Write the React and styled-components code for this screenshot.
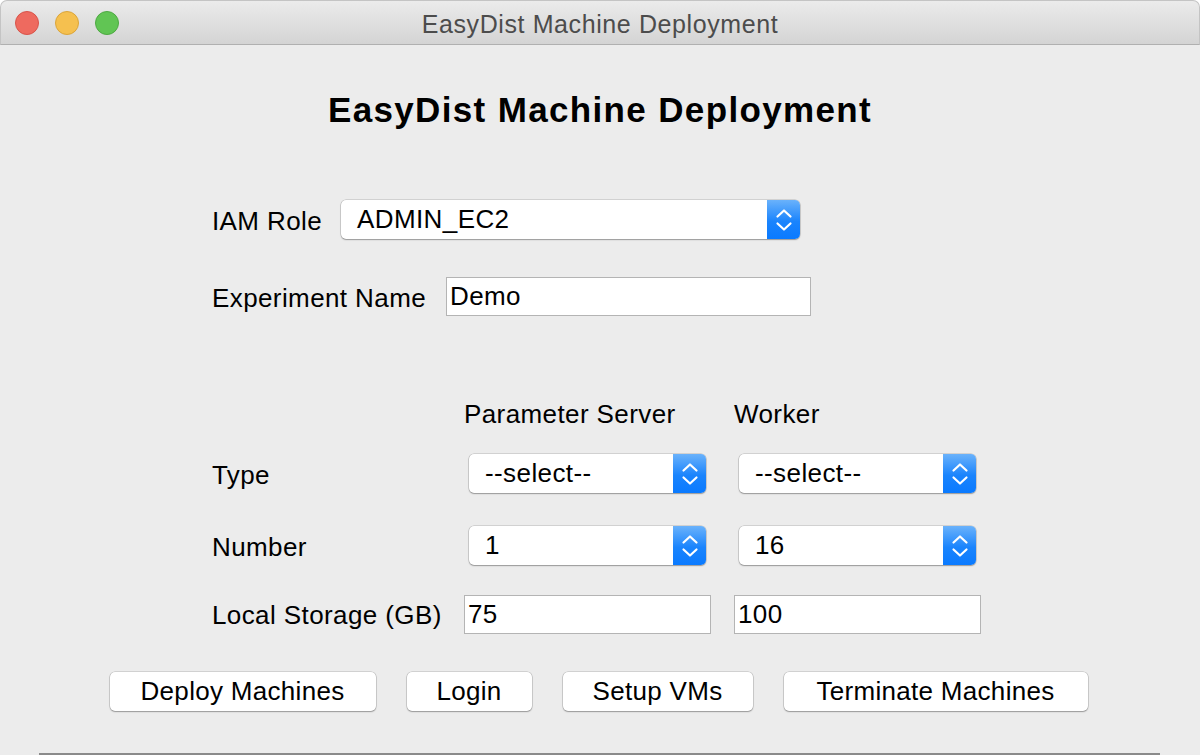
import React from "react";
import styled, { createGlobalStyle } from "styled-components";

const GlobalStyle = createGlobalStyle`
  html, body {
    margin: 0;
    padding: 0;
    background: #ffffff;
  }
  body {
    font-family: "Liberation Sans", Arial, sans-serif;
    color: #000;
  }
`;

const Chevrons = () => (
  <svg width="20" height="28" viewBox="0 0 20 28" fill="none">
    <path d="M3.5 10.5 L10 4.5 L16.5 10.5" stroke="#fff" strokeWidth="2.2" strokeLinecap="round" strokeLinejoin="round" />
    <path d="M3.5 17.5 L10 23.5 L16.5 17.5" stroke="#fff" strokeWidth="2.2" strokeLinecap="round" strokeLinejoin="round" />
  </svg>
);

const Select = ({ value, width, inset }) => (
  <SelectBox $width={width} $inset={inset}>
    <SelectText>{value}</SelectText>
    <SelectArrow>
      <Chevrons />
    </SelectArrow>
  </SelectBox>
);

const App = () => {
  return (
    <>
      <GlobalStyle />
      <Window>
        <TitleBar>
          <Lights>
            <Light $color="#ee6a5f" $border="#d8544a" />
            <Light $color="#f5c04f" $border="#dba53a" />
            <Light $color="#61c554" $border="#4ea943" />
          </Lights>
          <WindowTitle>EasyDist Machine Deployment</WindowTitle>
        </TitleBar>
        <Body>
          <Heading>EasyDist Machine Deployment</Heading>
          <Form>
            <Row $top={70}>
              <Label $width={129}>IAM Role</Label>
              <Select value="ADMIN_EC2" width={459} />
            </Row>
            <Row $top={38}>
              <Label $width={234}>Experiment Name</Label>
              <TextBox $width={365} value="Demo" readOnly />
            </Row>
            <Row $top={85} $height={27}>
              <Label $width={252} $flat />
              <Column>
                <Label $flat>Parameter Server</Label>
              </Column>
              <Column>
                <Label $flat>Worker</Label>
              </Column>
            </Row>
            <Row $top={26}>
              <Label $width={252}>Type</Label>
              <Column><Select value="--select--" width={237} inset /></Column>
              <Column><Select value="--select--" width={237} inset /></Column>
            </Row>
            <Row $top={33}>
              <Label $width={252}>Number</Label>
              <Column><Select value="1" width={237} inset /></Column>
              <Column><Select value="16" width={237} inset /></Column>
            </Row>
            <Row $top={30} $height={38}>
              <Label $width={252}>Local Storage (GB)</Label>
              <Column><TextBox $width={247} value="75" readOnly /></Column>
              <Column><TextBox $width={247} value="100" readOnly /></Column>
            </Row>
          </Form>
          <Buttons>
            <Button $width={266}>Deploy Machines</Button>
            <Button $width={125}>Login</Button>
            <Button $width={190}>Setup VMs</Button>
            <Button $width={304}>Terminate Machines</Button>
          </Buttons>
          <Divider />
        </Body>
      </Window>
    </>
  );
};

export default App;

const Window = styled.div`
  width: 1200px;
  height: 755px;
  display: flex;
  flex-direction: column;
  overflow: hidden;
`;

const TitleBar = styled.div`
  position: relative;
  height: 45px;
  flex-shrink: 0;
  box-sizing: border-box;
  display: flex;
  align-items: center;
  justify-content: center;
  background: linear-gradient(#ebebeb, #d4d4d4);
  border: 1px solid #c4c4c4;
  border-bottom: 1px solid #b0b0b0;
  border-radius: 7px 7px 0 0;
`;

const Lights = styled.div`
  position: absolute;
  left: 14px;
  top: 10px;
  display: flex;
  gap: 16px;
`;

const Light = styled.div`
  width: 24px;
  height: 24px;
  border-radius: 50%;
  box-sizing: border-box;
  background: ${(p) => p.$color};
  border: 1px solid ${(p) => p.$border};
`;

const WindowTitle = styled.div`
  font-size: 25px;
  line-height: 28px;
  margin-top: 3px;
  color: #4c4c4c;
  letter-spacing: 0.6px;
`;

const Body = styled.div`
  flex: 1;
  background: #ececec;
  display: flex;
  flex-direction: column;
`;

const Heading = styled.h1`
  margin: 45px 0 0;
  font-size: 35px;
  line-height: 40px;
  font-weight: bold;
  letter-spacing: 1.35px;
  text-align: center;
`;

const Form = styled.div`
  padding-left: 212px;
  display: flex;
  flex-direction: column;
`;

const Row = styled.div`
  display: flex;
  align-items: center;
  height: ${(p) => p.$height || 39}px;
  margin-top: ${(p) => p.$top}px;
`;

const Column = styled.div`
  width: 270px;
  flex-shrink: 0;
  display: flex;
  align-items: center;
`;

const Label = styled.div`
  width: ${(p) => (p.$width ? `${p.$width}px` : "auto")};
  flex-shrink: 0;
  padding-top: ${(p) => (p.$flat ? 0 : 3)}px;
  font-size: 26px;
  letter-spacing: 0.4px;
  white-space: nowrap;
`;

const SelectBox = styled.div`
  width: ${(p) => p.$width}px;
  height: 39px;
  margin-left: ${(p) => (p.$inset ? 5 : 0)}px;
  box-sizing: border-box;
  display: flex;
  align-items: stretch;
  background: #fff;
  border-radius: 5px;
  box-shadow: 0 0 0 0.5px rgba(0, 0, 0, 0.22), 0 1px 1.5px rgba(0, 0, 0, 0.28);
  overflow: hidden;
`;

const SelectText = styled.div`
  flex: 1;
  display: flex;
  align-items: center;
  padding-left: 16px;
  font-size: 26px;
  letter-spacing: 0.4px;
`;

const SelectArrow = styled.div`
  width: 33px;
  display: flex;
  align-items: center;
  justify-content: center;
  background: linear-gradient(#6ab2fb, #1a84fd 55%, #0a7aff);
`;

const TextBox = styled.input`
  width: ${(p) => p.$width}px;
  height: 39px;
  box-sizing: border-box;
  border: 1px solid #b4b4b4;
  background: #fff;
  padding: 0 3px;
  font-family: "Liberation Sans", Arial, sans-serif;
  font-size: 26px;
  letter-spacing: 0.4px;
  color: #000;
  outline: none;
  border-radius: 0;
`;

const Buttons = styled.div`
  margin-top: 39px;
  display: flex;
  justify-content: center;
  gap: 31px;
  padding-right: 3px;
`;

const Button = styled.button`
  width: ${(p) => p.$width}px;
  height: 39px;
  background: #fff;
  border: none;
  border-radius: 5px;
  box-shadow: 0 0 0 0.5px rgba(0, 0, 0, 0.22), 0 1px 1.5px rgba(0, 0, 0, 0.28);
  font-family: "Liberation Sans", Arial, sans-serif;
  font-size: 26px;
  letter-spacing: 0.3px;
  color: #000;
  padding: 0;
`;

const Divider = styled.div`
  margin: auto 40px 0 39px;
  height: 2px;
  background: #8a8a8a;
`;
